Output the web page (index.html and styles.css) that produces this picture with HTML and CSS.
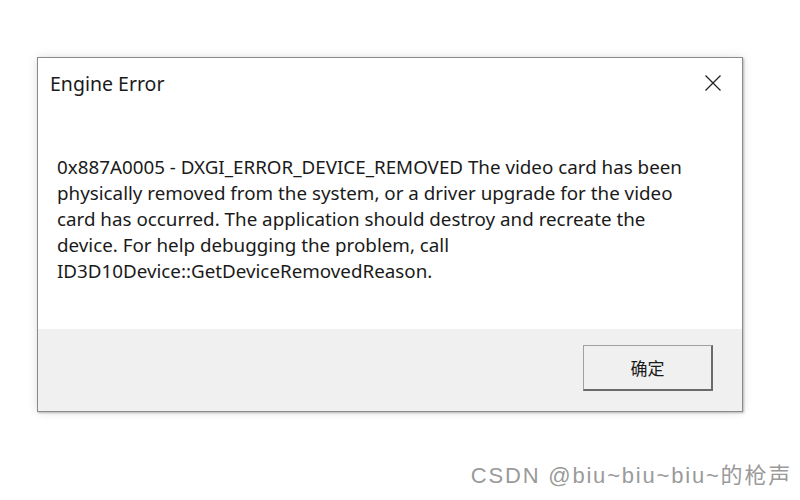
FILE: index.html
```html
<!DOCTYPE html>
<html>
<head>
<meta charset="utf-8">
<link rel="stylesheet" href="styles.css">
</head>
<body>
<div class="page">
  <div class="dialog">
    <div class="main">
      <div class="titlebar">
        <span class="title">Engine Error</span>
        <svg class="close" width="18" height="18" viewBox="0 0 18 18"><path d="M1.5 1.5 L16.5 16.5 M16.5 1.5 L1.5 16.5" stroke="#222" stroke-width="1.3" fill="none"/></svg>
      </div>
      <p class="message">0x887A0005 - DXGI_ERROR_DEVICE_REMOVED The video card has been physically removed from the system, or a driver upgrade for the video card has occurred. The application should destroy and recreate the device. For help debugging the problem, call ID3D10Device::GetDeviceRemovedReason.</p>
    </div>
    <div class="footer">
      <button class="ok">确定</button>
    </div>
  </div>
  <div class="watermark">CSDN @biu~biu~biu~的枪声</div>
</div>
</body>
</html>
```

FILE: styles.css
```css
html, body {
  margin: 0;
  padding: 0;
  background: #fff;
}
.page {
  position: relative;
  width: 800px;
  height: 500px;
  padding: 57px 0 0 37px;
  box-sizing: border-box;
}
.dialog {
  width: 706px;
  height: 355px;
  box-sizing: border-box;
  border: 1px solid #8a8a8a;
  box-shadow: 0 0 10px rgba(0,0,0,0.12), 1px 1px 2px rgba(0,0,0,0.25);
  display: flex;
  flex-direction: column;
  background: #fff;
  font-family: "Noto Sans", "Open Sans", sans-serif;
  color: #1a1a1a;
}
.main {
  height: 271px;
  padding: 0 0 0 12px;
  box-sizing: border-box;
}
.titlebar {
  display: flex;
  justify-content: space-between;
  align-items: center;
  height: 50px;
  padding-right: 20px;
}
.title {
  font-size: 19.5px;
  padding-top: 0;
}
.close {
  display: block;
  margin-top: 0;
}
.message {
  margin: 46px 0 0 7px;
  width: 632px;
  font-size: 18.8px;
  line-height: 26px;
}
.footer {
  flex: 1;
  background: #f0f0f0;
  display: flex;
  justify-content: flex-end;
  align-items: flex-start;
  padding: 16px 29px 0 0;
}
.ok {
  width: 130px;
  height: 46px;
  box-sizing: border-box;
  background: #f0f0f0;
  border: 1px solid #a0a0a0;
  border-right: 2px solid #6a6a6a;
  border-bottom: 2px solid #6a6a6a;
  font-family: "Noto Sans CJK SC", sans-serif;
  font-size: 17px;
  color: #1a1a1a;
  padding: 0;
}
.watermark {
  position: absolute;
  right: 8px;
  top: 457px;
  font-family: "Liberation Sans", "Noto Sans CJK SC", sans-serif;
  font-size: 22px;
  letter-spacing: 1.8px;
  color: #9a9a9a;
}
```
